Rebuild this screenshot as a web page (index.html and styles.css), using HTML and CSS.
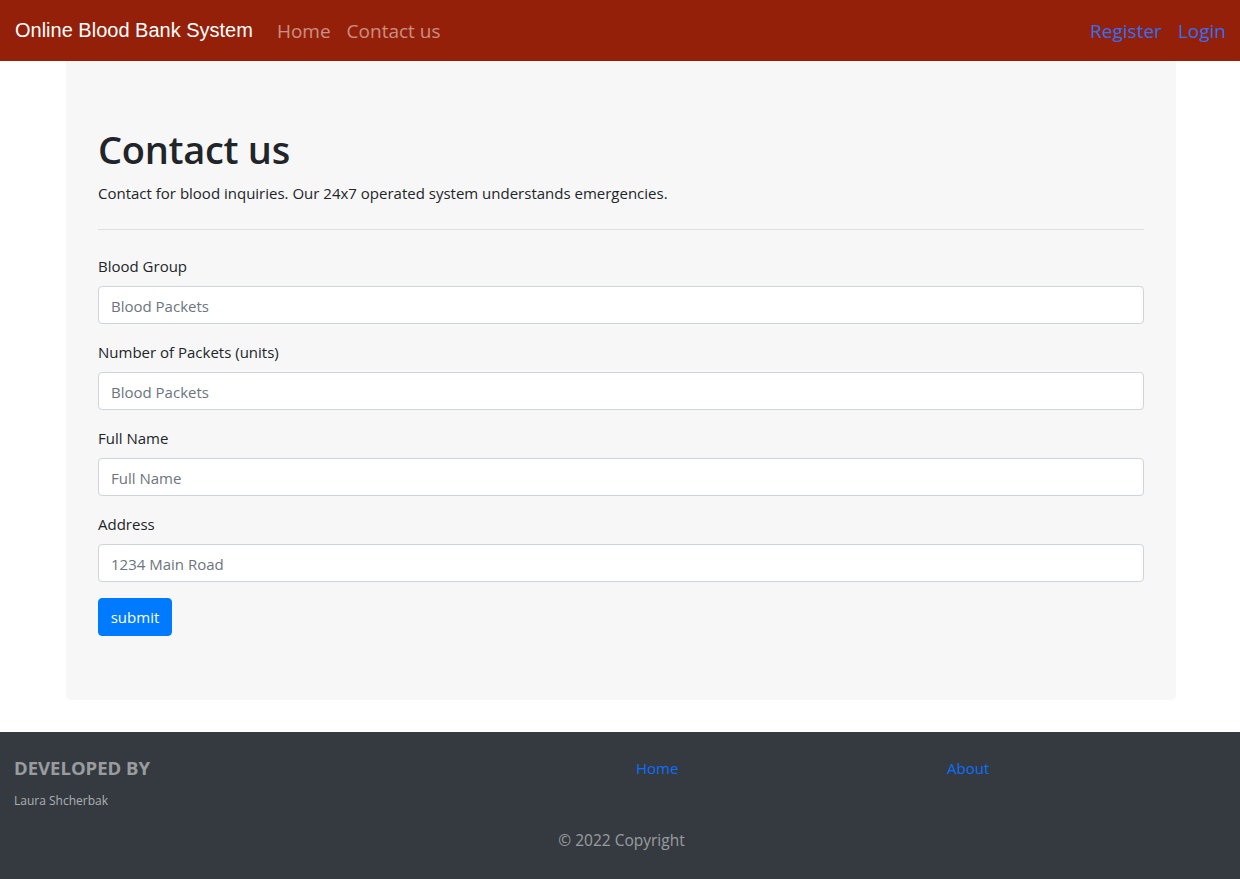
FILE: index.html
```html
<!DOCTYPE html>
<html lang="en">
<head>
<meta charset="utf-8">
<title>Contact us - Online Blood Bank System</title>
<link rel="stylesheet" href="styles.css">
</head>
<body>
<nav class="navbar">
  <a class="brand" href="#">Online Blood Bank System</a>
  <ul class="nav">
    <li><a class="nav-link" href="#">Home</a></li>
    <li><a class="nav-link" href="#">Contact us</a></li>
  </ul>
  <ul class="nav nav-right">
    <li><a class="nav-link blue" href="#">Register</a></li>
    <li><a class="nav-link blue" href="#">Login</a></li>
  </ul>
</nav>

<main class="container">
  <section class="jumbotron">
    <h1 class="title">Contact us</h1>
    <p class="lead">Contact for blood inquiries. Our 24x7 operated system understands emergencies.</p>
    <hr class="divider">
    <form class="form">
      <div class="form-group">
        <label class="label">Blood Group</label>
        <input class="input" type="text" placeholder="Blood Packets">
      </div>
      <div class="form-group">
        <label class="label">Number of Packets (units)</label>
        <input class="input" type="text" placeholder="Blood Packets">
      </div>
      <div class="form-group">
        <label class="label">Full Name</label>
        <input class="input" type="text" placeholder="Full Name">
      </div>
      <div class="form-group">
        <label class="label">Address</label>
        <input class="input" type="text" placeholder="1234 Main Road">
      </div>
      <button class="btn" type="button">submit</button>
    </form>
  </section>
</main>

<footer class="footer">
  <div class="footer-row">
    <div class="col-half">
      <h5 class="dev-title">DEVELOPED BY</h5>
      <p class="dev-name">Laura Shcherbak</p>
    </div>
    <div class="col-quarter"><a class="footer-link" href="#">Home</a></div>
    <div class="col-quarter"><a class="footer-link" href="#">About</a></div>
  </div>
  <div class="copyright">© 2022 Copyright</div>
</footer>
</body>
</html>
```

FILE: styles.css
```css
* { box-sizing: border-box; }

html, body {
  margin: 0;
  padding: 0;
}

body {
  font-family: "Open Sans", "Noto Sans", sans-serif;
  font-size: 16px;
  line-height: 1.5;
  color: #212529;
  background: #fff;
}

a { text-decoration: none; }

.navbar {
  height: 61px;
  background: #952009;
  display: flex;
  align-items: center;
  padding: 0 6px 0 15px;
}

.brand {
  font-family: "Liberation Sans", Arial, sans-serif;
  font-size: 20px;
  color: #fff;
  margin-right: 16px;
  line-height: 30px;
  margin-top: -2px;
}

.nav {
  list-style: none;
  margin: 0;
  padding: 0;
  display: flex;
}

.nav-right { margin-left: auto; }

.nav-link {
  display: block;
  padding: 0 8px;
  font-size: 19px;
  line-height: 30px;
  color: rgba(255, 255, 255, 0.5);
}

.nav-link.blue { color: #2f70f5; }

.container {
  width: 1112px;
  padding-left: 2px;
  margin: 0 auto;
}

.jumbotron {
  background: #f7f7f7;
  border-radius: 0 0 5px 5px;
  padding: 64px 32px;
  margin-bottom: 32px;
}

.title {
  margin: 0 0 8px;
  font-size: 38px;
  font-weight: 600;
  line-height: 48px;
  letter-spacing: -0.3px;
}

.lead {
  margin: 0;
  font-size: 15px;
  line-height: 24px;
}

.divider {
  margin: 24px 0;
  border: 0;
  border-top: 1px solid #dfdfdf;
}

.form-group { margin-bottom: 16px; }

.label {
  display: block;
  font-size: 15px;
  line-height: 24px;
  margin-bottom: 8px;
}

.input {
  display: block;
  width: 100%;
  height: 38px;
  padding: 7px 12px 5px;
  font-family: inherit;
  font-size: 15px;
  color: #495057;
  background: #fff;
  border: 1px solid #ced4da;
  border-radius: 4px;
}

.input::placeholder { color: #6c757d; opacity: 1; }

.btn {
  display: block;
  height: 38px;
  width: 74px;
  padding: 0;
  font-family: inherit;
  font-size: 15px;
  color: #fff;
  background: #007bff;
  border: 1px solid #007bff;
  border-radius: 4px;
}

.footer {
  background: #343a40;
  height: 147px;
  padding-top: 24px;
}

.footer-row { display: flex; }

.col-half { width: 50%; padding: 0 14px; }
.col-quarter { width: 25%; padding: 0 16px; }

.col-quarter:last-child { padding-left: 17px; }

.dev-title {
  margin: 0;
  font-size: 18.5px;
  font-weight: 700;
  line-height: 24px;
  color: rgba(255, 255, 255, 0.5);
}

.dev-name {
  margin: 12px 0 0;
  font-size: 12px;
  line-height: 18px;
  color: rgba(255, 255, 255, 0.6);
}

.footer-link {
  font-size: 15px;
  line-height: 24px;
  color: #0d6efd;
}

.copyright {
  text-align: center;
  margin-top: 18px;
  font-size: 15.5px;
  line-height: 24px;
  color: rgba(255, 255, 255, 0.5);
  padding-left: 3px;
}
```
